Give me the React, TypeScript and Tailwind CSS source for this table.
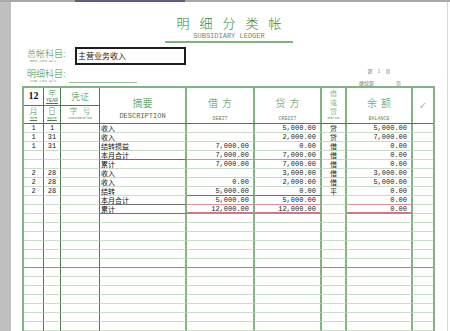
import React from 'react';

const cjk = "font-['Noto_Sans_CJK_SC',sans-serif]";
const mono = "font-['Liberation_Mono',monospace]";

type Row = {
  m?: string;
  d?: string;
  desc?: string;
  debit?: string;
  credit?: string;
  dc?: string;
  bal?: string;
  // bottom line styles per column (desc, debit, credit, balance)
  lines?: { desc?: string; debit?: string; credit?: string; bal?: string; all?: string };
};

const LINE = 'border-b border-b-[#c9dbc9]';
const RED = 'border-b border-b-[#dc8e9c]';
const RED2 = 'border-b-2 border-b-[#d27584]';
const DARK = 'border-b border-b-[#707070]';
const GREEN = 'border-b border-b-[#74a474]';

const THIN = 'border-r border-r-[#4c7c4c]';
const THICK = 'border-r-2 border-r-[#82b482]';

const data: Row[] = [
  { m: '1', d: '1', desc: '收入', credit: '5,000.00', dc: '贷', bal: '5,000.00' },
  { m: '1', d: '31', desc: '收入', credit: '2,000.00', dc: '贷', bal: '7,000.00' },
  { m: '1', d: '31', desc: '结转损益', debit: '7,000.00', credit: '0.00', dc: '借', bal: '0.00' },
  {
    desc: '本月合计', debit: '7,000.00', credit: '7,000.00', dc: '借', bal: '0.00',
    lines: { desc: DARK, debit: RED, credit: RED },
  },
  { desc: '累计', debit: '7,000.00', credit: '7,000.00', dc: '借', bal: '0.00' },
  { m: '2', d: '28', desc: '收入', credit: '3,000.00', dc: '借', bal: '3,000.00' },
  { m: '2', d: '28', desc: '收入', debit: '0.00', credit: '2,000.00', dc: '借', bal: '5,000.00' },
  {
    m: '2', d: '28', desc: '结转', debit: '5,000.00', credit: '0.00', dc: '平', bal: '0.00',
    lines: { debit: DARK, credit: DARK },
  },
  {
    desc: '本月合计', debit: '5,000.00', credit: '5,000.00', bal: '0.00',
    lines: { desc: DARK, debit: RED, credit: RED, bal: RED },
  },
  {
    desc: '累计', debit: '12,000.00', credit: '12,000.00', bal: '0.00',
    lines: { desc: DARK, debit: RED2, credit: RED2, bal: RED2 },
  },
];

const rows: Row[] = [...data];
while (rows.length < 24) rows.push({});
rows[15] = { lines: { all: GREEN } };

function DataRow({ r }: { r: Row }) {
  const l = r.lines || {};
  const b = (k?: string) => k || l.all || LINE;
  const num = `${mono} text-[7px] leading-[8px] text-right pr-[4px] text-[#222]`;
  return (
    <div className="flex h-[9px]">
      <div className={`w-[20px] ${THIN} ${b()} ${mono} text-[7px] leading-[8px] text-center text-[#222]`}>{r.m}</div>
      <div className={`w-[17px] ${THIN} ${b()} ${mono} text-[7px] leading-[8px] text-center text-[#222]`}>{r.d}</div>
      <div className={`w-[39px] ${THIN} ${b()}`} />
      <div className={`w-[87px] ${THICK} ${b(l.desc)} ${cjk} text-[7px] leading-[8px] pl-[1px] text-[#111]`}>{r.desc}</div>
      <div className={`w-[68px] ${THICK} ${b(l.debit)} ${num}`}>{r.debit}</div>
      <div className={`w-[67px] ${THICK} ${b(l.credit)} ${num}`}>{r.credit}</div>
      <div className={`w-[25px] ${THICK} ${b()} ${cjk} text-[7px] leading-[8px] text-center text-[#222]`}>{r.dc}</div>
      <div className={`w-[66px] ${THICK} ${b(l.bal)} ${num}`}>{r.bal}</div>
      <div className={`w-[20px] ${b()}`} />
    </div>
  );
}

function BigHead({ zh, en, w }: { zh: string; en: string; w: string }) {
  return (
    <div className={`${w} ${THICK} flex flex-col items-center pt-[9px]`}>
      <div className={`${cjk} font-light text-[10px] leading-[11px] tracking-[4px] pl-[4px] text-[#3d8f3d]`}>{zh}</div>
      <div className={`${mono} text-[5px] leading-[6px] mt-[8px] text-[#6a8a6a]`}>{en}</div>
    </div>
  );
}

export default function App() {
  return (
    <div className="w-[450px] h-[331px] overflow-hidden bg-white flex flex-col">
      <div className="h-[2px] flex shrink-0 bg-[#a8a8a8]">
        <div className="ml-[75px] w-[110px] bg-[#5c5c7c]" />
      </div>
      <div className="flex flex-1 min-h-0">
        <div className="w-[11px] bg-[#bfbfbf] shrink-0" />
        <div className="flex-1 flex flex-col min-w-0">
          {/* title */}
          <div className="flex flex-col items-center pt-[13px]">
            <div className={`${cjk} font-light text-[13px] leading-[15px] tracking-[10px] pl-[10px] text-[#2f8c2f]`}>明细分类帐</div>
            <div className={`${mono} text-[7px] leading-[7px] mt-[3px] text-[#6d8d6d]`}>SUBSIDIARY LEDGER</div>
            <div className="w-[128px] h-[2px] mt-[1px] bg-[#7db47d]" />
          </div>

          {/* fields */}
          <div className="flex h-[43px] mt-[3px] pl-[16px]">
            <div className="w-[48px] flex flex-col">
              <div className={`${cjk} font-light text-[9px] leading-[10px] mt-[3px] text-[#3d8f3d]`}>总帐科目:</div>
              <div className={`${mono} text-[4px] leading-[5px] pl-[3px] text-[#8a9a8a]`}>GEN.LED.A/C.</div>
              <div className={`${cjk} font-light text-[9px] leading-[10px] mt-[5px] text-[#3d8f3d]`}>明细科目:</div>
              <div className={`${mono} text-[4px] leading-[5px] pl-[3px] text-[#8a9a8a]`}>SUB.LED.A/C.</div>
            </div>
            <div className="flex flex-col">
              <div className={`w-[111px] h-[18px] mt-[1px] border-2 border-[#1c1c1c] ${cjk} text-[8px] leading-[14px] pl-[1px] text-[#222]`}>
                主营业务收入
              </div>
              <div className="ml-[-6px] mt-[17px] w-[68px] h-[1px] bg-[#9ab89a]" />
            </div>
            <div className="ml-auto mr-[46px] w-[42px] flex flex-col items-center">
              <div className={`${cjk} text-[5px] leading-[6px] mt-[22px] text-[#777] tracking-[2px]`}>第 1 页</div>
              <div className={`${cjk} text-[5px] leading-[6px] mt-[6px] text-[#777] w-full flex justify-between`}>
                <span>继续第</span>
                <span>页</span>
              </div>
            </div>
          </div>

          {/* table */}
          <div className="ml-[11px] w-[413px] border-l-2 border-t-2 border-r-2 border-[#82b482] flex flex-col">
            <div className="flex h-[36px] border-b border-b-[#4c7c4c]">
              <div className="w-[76px] flex flex-col">
                <div className="flex h-[18px] border-b border-b-[#4c7c4c]">
                  <div className={`w-[20px] ${THIN} text-center font-['Liberation_Serif',serif] font-bold text-[10px] leading-[16px] text-[#111]`}>12</div>
                  <div className={`w-[17px] ${THIN} flex flex-col items-center`}>
                    <div className={`${cjk} font-light text-[8px] leading-[10px] text-[#3d8f3d]`}>年</div>
                    <div className={`${mono} text-[5px] leading-[6px] underline text-[#4c7c4c]`}>YEAR</div>
                  </div>
                  <div className={`w-[39px] ${THIN} text-center ${cjk} font-light text-[9px] leading-[17px] text-[#3d8f3d]`}>凭证</div>
                </div>
                <div className="flex h-[17px]">
                  <div className={`w-[20px] ${THIN} flex flex-col items-center`}>
                    <div className={`${cjk} font-light text-[8px] leading-[10px] text-[#3d8f3d]`}>月</div>
                    <div className={`${mono} text-[4px] leading-[5px] underline text-[#4c7c4c]`}>MTH</div>
                  </div>
                  <div className={`w-[17px] ${THIN} flex flex-col items-center`}>
                    <div className={`${cjk} font-light text-[8px] leading-[10px] text-[#3d8f3d]`}>日</div>
                    <div className={`${mono} text-[4px] leading-[5px] underline text-[#4c7c4c]`}>DATE</div>
                  </div>
                  <div className={`w-[39px] ${THIN} flex flex-col items-center`}>
                    <div className={`${cjk} font-light text-[8px] leading-[10px] tracking-[5px] pl-[5px] text-[#3d8f3d]`}>字号</div>
                    <div className={`${mono} text-[4px] leading-[5px] text-[#6a8a6a]`}>VOUCHER/NO</div>
                  </div>
                </div>
              </div>
              <div className={`w-[87px] ${THICK} flex flex-col items-center pt-[9px]`}>
                <div className={`${cjk} font-light text-[10px] leading-[11px] text-[#3d8f3d]`}>摘要</div>
                <div className={`${mono} text-[7px] leading-[7px] mt-[5px] text-[#4a6a4a]`}>DESCRIPTION</div>
              </div>
              <BigHead zh="借方" en="DEBIT" w="w-[68px]" />
              <BigHead zh="贷方" en="CREDIT" w="w-[67px]" />
              <div className={`w-[25px] ${THICK} flex flex-col items-center pt-[1px]`}>
                <div className={`${cjk} font-light text-[7px] leading-[9px] text-[#3d8f3d]`}>借</div>
                <div className={`${cjk} font-light text-[7px] leading-[9px] text-[#3d8f3d]`}>或</div>
                <div className={`${cjk} font-light text-[7px] leading-[9px] text-[#3d8f3d]`}>贷</div>
                <div className={`${mono} text-[4px] leading-[5px] text-[#6a8a6a]`}>DR/CR</div>
              </div>
              <BigHead zh="余额" en="BALANCE" w="w-[66px]" />
              <div className="w-[20px] flex items-center justify-center">
                <span className="text-[10px] text-[#b0b0b0] font-['DejaVu_Sans',sans-serif]">✓</span>
              </div>
            </div>
            {rows.map((r, i) => (
              <DataRow key={i} r={r} />
            ))}
          </div>
        </div>
        <div className="w-[3px] border-l border-l-[#d8d8d8] shrink-0" />
      </div>
    </div>
  );
}
